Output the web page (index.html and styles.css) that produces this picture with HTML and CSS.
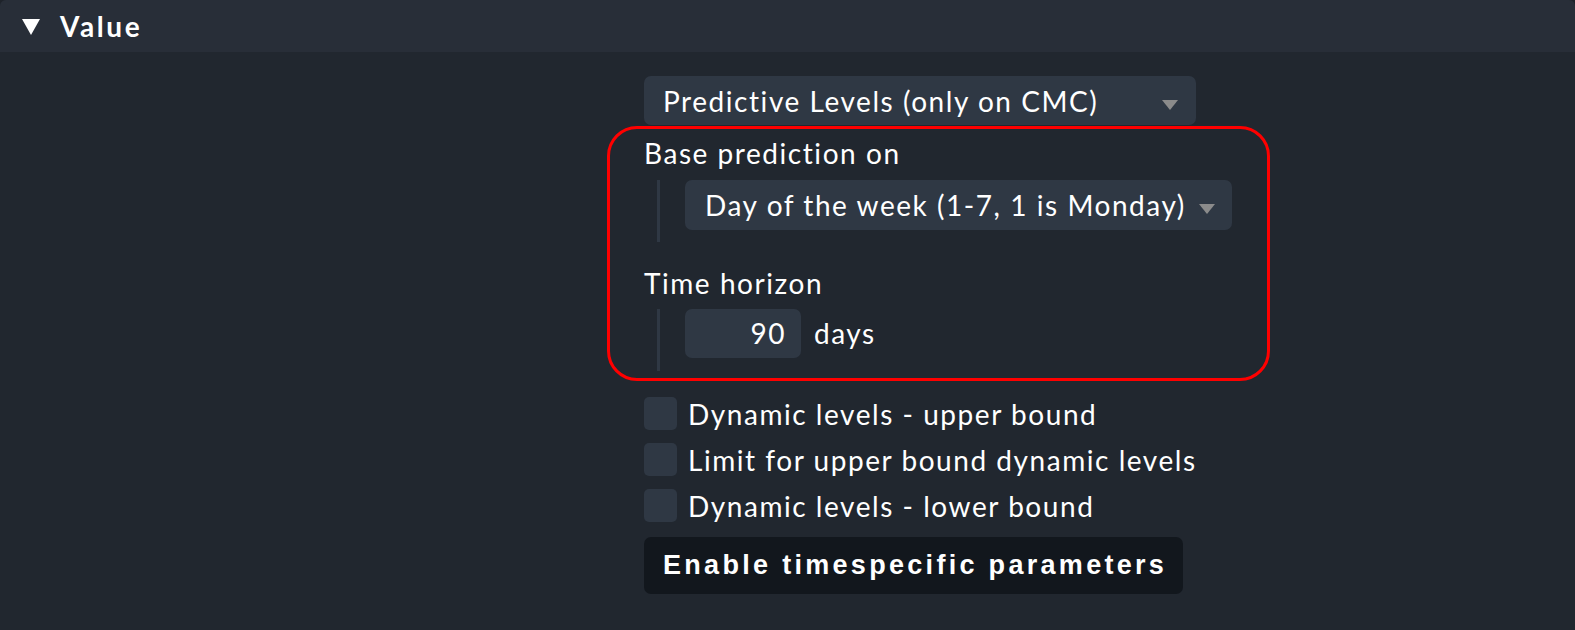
FILE: index.html
```html
<!DOCTYPE html>
<html>
<head>
<meta charset="utf-8">
<link rel="stylesheet" href="styles.css">
</head>
<body>
<div class="section">
  <div class="header">
    <span class="tri"></span>
    <span class="title">Value</span>
  </div>
  <div class="content">
    <div class="select select-main">
      <span>Predictive Levels (only on CMC)</span>
      <span class="arrow"></span>
    </div>
    <div class="highlight">
      <div class="label">Base prediction on</div>
      <div class="nest">
        <div class="select select-day">
          <span>Day of the week (1-7, 1 is Monday)</span>
          <span class="arrow"></span>
        </div>
      </div>
      <div class="label label-second">Time horizon</div>
      <div class="nest nest-row">
        <div class="numinput">90</div>
        <span class="unit">days</span>
      </div>
    </div>
    <div class="checks">
      <div class="check"><span class="box"></span><span>Dynamic levels - upper bound</span></div>
      <div class="check"><span class="box"></span><span>Limit for upper bound dynamic levels</span></div>
      <div class="check"><span class="box"></span><span>Dynamic levels - lower bound</span></div>
    </div>
    <div class="button">Enable timespecific parameters</div>
  </div>
</div>
</body>
</html>
```
FILE: styles.css
```css
html, body {
  margin: 0;
  padding: 0;
  background: #1e232a;
}
body {
  width: 1575px;
  height: 630px;
  overflow: hidden;
  font-family: Lato, "Open Sans", sans-serif;
  color: #ffffff;
}
.section {
  width: 1575px;
  height: 630px;
  background: #21272f;
  border-radius: 6px 6px 0 0;
  overflow: hidden;
}
.header {
  height: 52px;
  background: #282e38;
  display: flex;
  align-items: center;
  padding-left: 22px;
  box-sizing: border-box;
}
.tri {
  width: 0;
  height: 0;
  border-left: 9px solid transparent;
  border-right: 9px solid transparent;
  border-top: 16px solid #ffffff;
  margin-top: 1px;
}
.title {
  margin-left: 20px;
  font-size: 28px;
  font-weight: 700;
  letter-spacing: 2.6px;
}
.content {
  padding-left: 644px;
  padding-top: 24px;
  font-size: 28px;
}
.select {
  box-sizing: border-box;
  height: 49px;
  background: #2f3844;
  border-radius: 7px;
  display: flex;
  align-items: center;
  justify-content: space-between;
  padding-left: 19px;
  letter-spacing: 1.55px;
}
.select-main {
  width: 552px;
  padding-right: 18px;
}
.select-day {
  width: 547px;
  height: 50px;
  padding-left: 20px;
  padding-right: 17px;
}
.arrow {
  width: 0;
  height: 0;
  border-left: 8px solid transparent;
  border-right: 8px solid transparent;
  border-top: 10px solid #8b8b8b;
  margin-top: 8px;
  flex: none;
}
.highlight {
  margin-left: -37px;
  margin-top: 1px;
  width: 663px;
  box-sizing: border-box;
  border: 3px solid #ff0000;
  border-radius: 30px;
  padding: 8px 0 7px 34px;
}
.label {
  line-height: 32px;
  letter-spacing: 1.55px;
}
.label-second {
  margin-top: 25px;
}
.nest {
  margin-top: 11px;
  margin-left: 13px;
  border-left: 3px solid #2f3844;
  padding-left: 25px;
  padding-bottom: 12px;
}
.nest-row {
  display: flex;
  align-items: flex-start;
  margin-top: 10px;
  padding-bottom: 13px;
}
.numinput {
  box-sizing: border-box;
  width: 116px;
  height: 49px;
  background: #2f3844;
  border-radius: 7px;
  text-align: right;
  padding-right: 15px;
  line-height: 49px;
  letter-spacing: 1.55px;
}
.unit {
  margin-left: 13px;
  line-height: 49px;
  letter-spacing: 1.55px;
}
.checks {
  margin-top: 16px;
  display: flex;
  flex-direction: column;
  gap: 13px;
}
.check {
  display: flex;
  align-items: center;
  height: 33px;
  letter-spacing: 1.55px;
}
.box {
  width: 33px;
  height: 33px;
  background: #2f3844;
  border-radius: 5px;
  margin-right: 11px;
}
.button {
  margin-top: 15px;
  display: inline-flex;
  align-items: center;
  height: 57px;
  box-sizing: border-box;
  padding: 0 16px 0 19px;
  background: #12171d;
  border-radius: 7px;
  font-family: "Liberation Sans", Arial, sans-serif;
  font-size: 27px;
  font-weight: 700;
  letter-spacing: 3.3px;
}
```
